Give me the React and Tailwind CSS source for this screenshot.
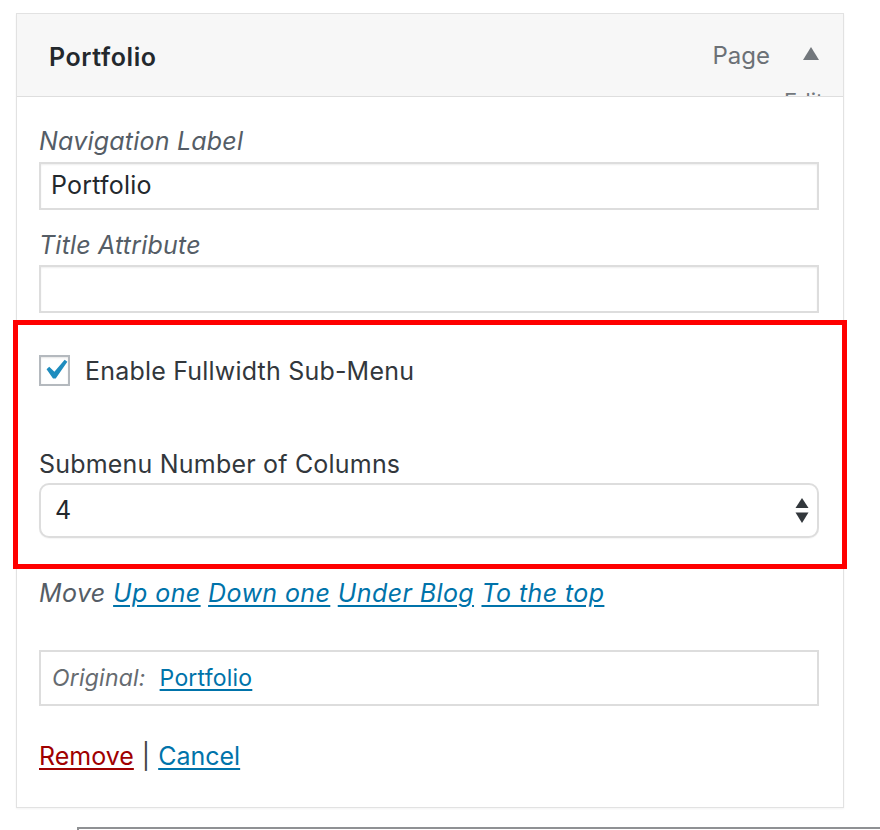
import React from "react";

export default function App() {
  return (
    <div className="min-h-[830px] w-[880px] overflow-hidden bg-white font-['Inter',sans-serif] text-[#32373c]">
      <div className="h-[13px]" />
      {/* Panel */}
      <div className="ml-[16px] w-[828px] border border-[#e2e2e2] bg-white shadow-[0_1px_2px_rgba(0,0,0,0.05)]">
        {/* Header */}
        <div className="relative flex h-[83px] items-center justify-between overflow-hidden border-b border-[#dedede] bg-[#f7f7f7] pl-[32px] pr-[24px] pt-[3px]">
          <span className="text-[25px] font-semibold leading-[30px] tracking-[0.6px] text-[#23282d]">Portfolio</span>
          <div className="flex items-center gap-[33px]">
            <span className="mb-[2px] text-[24px] leading-[30px] text-[#6c7176]">Page</span>
            <svg width="16" height="13" viewBox="0 0 16 13" className="mb-[6px]">
              <polygon points="8,0 16,13 0,13" fill="#72777c" />
            </svg>
          </div>
          <span className="absolute left-[767px] top-[76px] text-[22px] leading-[22px] text-[#72777c]">Edit</span>
        </div>

        {/* Body */}
        <div className="pb-[36px] pl-[22px] pr-[24px] pt-[29px] tracking-[0.2px]">
          <div className="text-[25px] italic leading-[30px] text-[#555d66]">Navigation Label</div>
          <div className="mt-[6px] flex h-[48px] items-center border-2 border-[#dddddd] bg-white pl-[10px] text-[25px] text-[#23282d] shadow-[inset_0_1px_2px_rgba(0,0,0,0.07)]">
            Portfolio
          </div>
          <div className="mt-[20px] text-[25px] italic leading-[30px] text-[#555d66]">Title Attribute</div>
          <div className="mt-[5px] h-[48px] border-2 border-[#dddddd] bg-white shadow-[inset_0_1px_2px_rgba(0,0,0,0.07)]" />

          {/* Highlighted area */}
          <div className="-ml-[26px] -mr-[28px] mt-[7px] h-[249px] border-[5px] border-[#ff0000] pl-[21px] pr-[23px] pt-[30px]">
            <div className="flex items-center">
              <div className="relative h-[31px] w-[31px] border-2 border-[#b4b9be] bg-white shadow-[inset_0_1px_2px_rgba(0,0,0,0.1)]">
                <svg width="40" height="40" viewBox="0 0 20 20" className="absolute left-[-6px] top-[-7px]">
                  <path d="M14.83 4.89l1.34.94-5.81 8.38H9.02L5.78 9.67l1.34-1.25 2.57 2.4z" fill="#1e8cbe" />
                </svg>
              </div>
              <span className="ml-[15px] text-[25px] leading-[30px] text-[#32373c]">Enable Fullwidth Sub-Menu</span>
            </div>
            <div className="mt-[63px] text-[25px] leading-[30px] text-[#32373c]">Submenu Number of Columns</div>
            <div className="mt-[4px] flex h-[55px] items-center justify-between rounded-[10px] border-2 border-[#dddddd] bg-white pl-[14px] pr-[8px] shadow-[0_1px_1px_rgba(0,0,0,0.04)]">
              <span className="text-[25px] text-[#23282d]">4</span>
              <svg width="14" height="26" viewBox="0 0 14 26">
                <polygon points="7,0 13.5,10 0.5,10" fill="#32373c" />
                <polygon points="0.5,14.5 13.5,14.5 7,25" fill="#32373c" />
              </svg>
            </div>
          </div>

          <div className="mt-[9px] text-[25px] italic leading-[30px] tracking-[0.4px] text-[#555d66]">
            Move{" "}
            <a className="text-[#0073aa] underline underline-offset-[3px]">Up one</a>{" "}
            <a className="text-[#0073aa] underline underline-offset-[3px]">Down one</a>{" "}
            <a className="text-[#0073aa] underline underline-offset-[3px]">Under Blog</a>{" "}
            <a className="text-[#0073aa] underline underline-offset-[3px]">To the top</a>
          </div>

          <div className="mt-[42px] flex h-[56px] items-center border-2 border-[#dddddd] pl-[11px] text-[23px] leading-[30px]">
            <span className="italic text-[#666b70]">Original:</span>
            <a className="ml-[14px] text-[#0073aa] underline underline-offset-[3px]">Portfolio</a>
          </div>

          <div className="mt-[35px] text-[25px] leading-[30px] tracking-normal text-[#444]">
            <a className="text-[#a00000] underline underline-offset-[3px]">Remove</a>
            <span className="mx-[8px]">|</span>
            <a className="text-[#0073aa] underline underline-offset-[3px]">Cancel</a>
          </div>
        </div>
      </div>

      <div className="ml-[77px] mt-[19px] h-[10px] border-l-2 border-t-2 border-[#8f9194]" />
    </div>
  );
}
